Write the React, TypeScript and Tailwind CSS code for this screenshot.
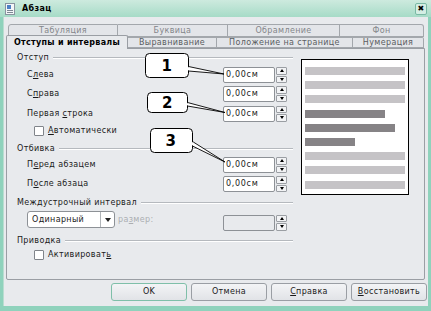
import React from "react";

const font = "font-['DejaVu_Sans',_'Liberation_Sans',_sans-serif]";

const Mn = ({ pre, u, post }: { pre: string; u: string; post: string }) => (
  <span>
    {pre}
    <span className="underline underline-offset-1">{u}</span>
    {post}
  </span>
);

const Header = ({ title, mt = 0 }: { title: string; mt?: number }) => (
  <div className="flex items-center h-[14px] pl-[10px]" style={{ marginTop: mt }}>
    <span>{title}</span>
    <div className="flex-1 ml-[4px] border-t border-t-[#b5b9be] border-b border-b-white h-[2px]" />
  </div>
);

const SpinField = ({ value, disabled }: { value: string; disabled?: boolean }) => (
  <div className="flex h-[16px] w-[64px]">
    <div
      className={
        "flex-1 border border-[#8d9196] rounded-[2px] flex items-center pl-[2px] text-[8px] tracking-[0.7px] " +
        (disabled ? "bg-[#e8eaed]" : "bg-white")
      }
    >
      {value}
    </div>
    <div className="w-[11px] ml-[1px] flex flex-col gap-[1px]">
      <div className="flex-1 border border-[#9a9ea3] rounded-[1px] bg-[#f2f3f5] flex items-center justify-center">
        <div className="w-0 h-0 border-l-[2px] border-r-[2px] border-b-[3px] border-l-transparent border-r-transparent border-b-black" />
      </div>
      <div className="flex-1 border border-[#9a9ea3] rounded-[1px] bg-[#f2f3f5] flex items-center justify-center">
        <div className="w-0 h-0 border-l-[2px] border-r-[2px] border-t-[3px] border-l-transparent border-r-transparent border-t-black" />
      </div>
    </div>
  </div>
);

const Checkbox = () => (
  <div className="w-[10px] h-[10px] bg-white border border-[#80848a] rounded-[1px] mr-[4px]" />
);

const Row = ({ label, h, field }: { label: React.ReactNode; h: number; field?: React.ReactNode }) => (
  <div className="flex items-center pl-[20px] pr-[6px]" style={{ height: h }}>
    <span>{label}</span>
    <div className="ml-auto">{field}</div>
  </div>
);

const tabsTop = [
  { t: "Табуляция", w: 110 },
  { t: "Буквица", w: 110 },
  { t: "Обрамление", w: 112 },
  { t: "Фон", w: 84 },
];

const tabsBottom = [
  { t: "Выравнивание", w: 89 },
  { t: "Положение на странице", w: 136 },
  { t: "Нумерация", w: 71 },
];

const bars = [
  { w: 100, dark: false },
  { w: 100, dark: false },
  { w: 100, dark: false },
  { w: 80, dark: true },
  { w: 90, dark: true },
  { w: 50, dark: true },
  { w: 100, dark: false },
  { w: 100, dark: false },
  { w: 100, dark: false },
];

const buttons = [
  { label: "OK", def: true },
  { label: "Отмена" },
  { label: <Mn pre="" u="С" post="правка" /> },
  { label: <Mn pre="" u="В" post="осстановить" /> },
];

const Callouts = () => (
  <svg className="absolute left-0 top-0 pointer-events-none" width="431" height="311" viewBox="0 0 431 311">
    {/* 1 */}
    <rect x="145.5" y="53.5" width="43" height="24" rx="4" fill="white" stroke="black" />
    <polygon points="188.5,66.5 224,74 188.5,71" fill="white" stroke="black" strokeWidth="0.9" />
    <line x1="188.5" y1="67.2" x2="188.5" y2="70.3" stroke="white" strokeWidth="1.5" />
    <text x="167" y="71" textAnchor="middle" fontFamily="DejaVu Sans" fontWeight="bold" fontSize="15">1</text>
    {/* 2 */}
    <rect x="147.5" y="92.5" width="40" height="20" rx="4" fill="white" stroke="black" />
    <polygon points="187.5,102.5 225,112.5 187.5,106" fill="white" stroke="black" strokeWidth="0.9" />
    <line x1="187.5" y1="103.2" x2="187.5" y2="105.3" stroke="white" strokeWidth="1.5" />
    <text x="167.5" y="108" textAnchor="middle" fontFamily="DejaVu Sans" fontWeight="bold" fontSize="15">2</text>
    {/* 3 */}
    <rect x="150.5" y="128.5" width="42" height="24" rx="4" fill="white" stroke="black" />
    <polygon points="192.5,141.5 225,162 192.5,146" fill="white" stroke="black" strokeWidth="0.9" />
    <line x1="192.5" y1="142.2" x2="192.5" y2="145.3" stroke="white" strokeWidth="1.5" />
    <text x="171" y="146" textAnchor="middle" fontFamily="DejaVu Sans" fontWeight="bold" fontSize="15">3</text>
  </svg>
);

export default function App() {
  return (
    <div className={"relative w-[431px] h-[311px] bg-[#8fd2bc] flex flex-col text-[8px] tracking-[0.35px] text-[#1a1a1a] overflow-hidden " + font}>
      {/* title bar */}
      <div className="h-[17px] flex items-center bg-gradient-to-b from-[#cdeade] to-[#a6dbc7] px-[4px]">
        <svg width="12" height="12" viewBox="0 0 12 12">
          <rect x="1.5" y="0.5" width="9" height="11" fill="#f4f6f8" stroke="#8a94a0" />
          <rect x="3" y="2" width="4" height="4" fill="#4e7fc4" />
          <line x1="3" y1="7.5" x2="9" y2="7.5" stroke="#7d8793" />
          <line x1="3" y1="9.5" x2="9" y2="9.5" stroke="#7d8793" />
        </svg>
        <span className="ml-[6px] font-bold text-black">Абзац</span>
        <div className="ml-auto w-[12px] h-[12px] rounded-[2px] border border-[#7ab9a5] bg-[#d4eee4] flex items-center justify-center text-[8px] font-bold text-black leading-none">
          ✖
        </div>
      </div>

      {/* dialog body */}
      <div className="mx-[3px] mb-[5px] flex-1 bg-[#e8eaed] flex flex-col border-l border-l-[#b9ddd0]">
        {/* tabs row 1 */}
        <div className="flex mt-[7px] ml-[4px] h-[11px]">
          {tabsTop.map((tab, i) => (
            <div
              key={i}
              className={
                "h-[13px] border border-[#a3a7ac] bg-[#e3e5e9] flex justify-center text-[#838689] leading-[11px] " +
                (i === 0 ? "rounded-tl-[3px] " : "border-l-0 ") +
                (i === tabsTop.length - 1 ? "rounded-tr-[3px]" : "")
              }
              style={{ width: tab.w }}
            >
              {tab.t}
            </div>
          ))}
        </div>

        {/* tabs row 2 */}
        <div className="flex ml-[2px] h-[13px] items-end relative z-10">
          <div className="w-[122px] h-[14px] border border-[#9a9ea4] border-b-0 rounded-t-[2px] bg-[#e8eaed] font-bold text-black flex justify-center pt-[1px] leading-[11px] tracking-[0.3px] translate-y-[1px]">
            Отступы и интервалы
          </div>
          {tabsBottom.map((tab, i) => (
            <div
              key={i}
              className={
                "h-[11px] border border-[#a3a7ac] border-l-0 bg-[#e3e5e9] flex justify-center text-[#5a5d61] leading-[10px] " +
                (i === tabsBottom.length - 1 ? "rounded-tr-[2px]" : "")
              }
              style={{ width: tab.w }}
            >
              {tab.t}
            </div>
          ))}
        </div>

        {/* panel */}
        <div className="ml-[2px] w-[419px] h-[232px] border border-[#9a9ea4] rounded-b-[2px] flex">
          <div className="w-[286px] flex flex-col pt-[2px]">
            <Header title="Отступ" />
            <Row h={20} label={<Mn pre="С" u="л" post="ева" />} field={<SpinField value="0,00см" />} />
            <Row h={18} label={<Mn pre="С" u="п" post="рава" />} field={<SpinField value="0,00см" />} />
            <Row h={21} label={<Mn pre="Первая " u="с" post="трока" />} field={<SpinField value="0,00см" />} />
            <div className="flex items-center h-[13px] pl-[27px]">
              <Checkbox />
              <Mn pre="" u="А" post="втоматически" />
            </div>
            <Header title="Отбивка" mt={5} />
            <Row h={18} label={<Mn pre="П" u="е" post="ред абзацем" />} field={<SpinField value="0,00см" />} />
            <Row h={20} label={<Mn pre="П" u="о" post="сле абзаца" />} field={<SpinField value="0,00см" />} />
            <Header title="Междустрочный интервал" mt={2} />
            <div className="flex items-center h-[19px] pl-[20px] pr-[6px]">
              <div className="w-[88px] h-[17px] bg-white border border-[#8d9196] rounded-[3px] flex items-center">
                <span className="flex-1 pl-[4px]">Одинарный</span>
                <div className="w-[14px] h-full border-l border-l-[#b0b4b8] flex items-center justify-center">
                  <div className="w-0 h-0 border-l-[3px] border-r-[3px] border-t-[4px] border-l-transparent border-r-transparent border-t-[#222]" />
                </div>
              </div>
              <span className="ml-[3px] text-[#abaeb2]">
                <Mn pre="ра" u="з" post="мер:" />
              </span>
              <div className="ml-auto mt-[6px]">
                <SpinField value="" disabled />
              </div>
            </div>
            <Header title="Приводка" mt={5} />
            <div className="flex items-center h-[13px] pl-[27px]">
              <Checkbox />
              <Mn pre="Активироват" u="ь" post="" />
            </div>
          </div>

          {/* preview */}
          <div className="ml-[8px] mt-[10px] w-[108px] h-[136px] border border-black bg-white flex flex-col gap-[6.2px] pl-[3px] pt-[7px]">
            {bars.map((b, i) => (
              <div
                key={i}
                className={"h-[8px] " + (b.dark ? "bg-[#868386]" : "bg-[#c5c3c6]")}
                style={{ width: b.w }}
              />
            ))}
          </div>
        </div>

        {/* buttons */}
        <div className="flex mt-[3px] ml-[107px] gap-[4px]">
          {buttons.map((b, i) => (
            <div
              key={i}
              className={
                "w-[76px] h-[18px] rounded-[3px] border bg-gradient-to-b from-[#f3f4f6] to-[#e1e3e7] flex items-center justify-center text-[#1a1a1a] " +
                (b.def ? "border-[#7fbfa9]" : "border-[#9a9ea4]")
              }
            >
              {b.label}
            </div>
          ))}
        </div>
      </div>

      <Callouts />
    </div>
  );
}
